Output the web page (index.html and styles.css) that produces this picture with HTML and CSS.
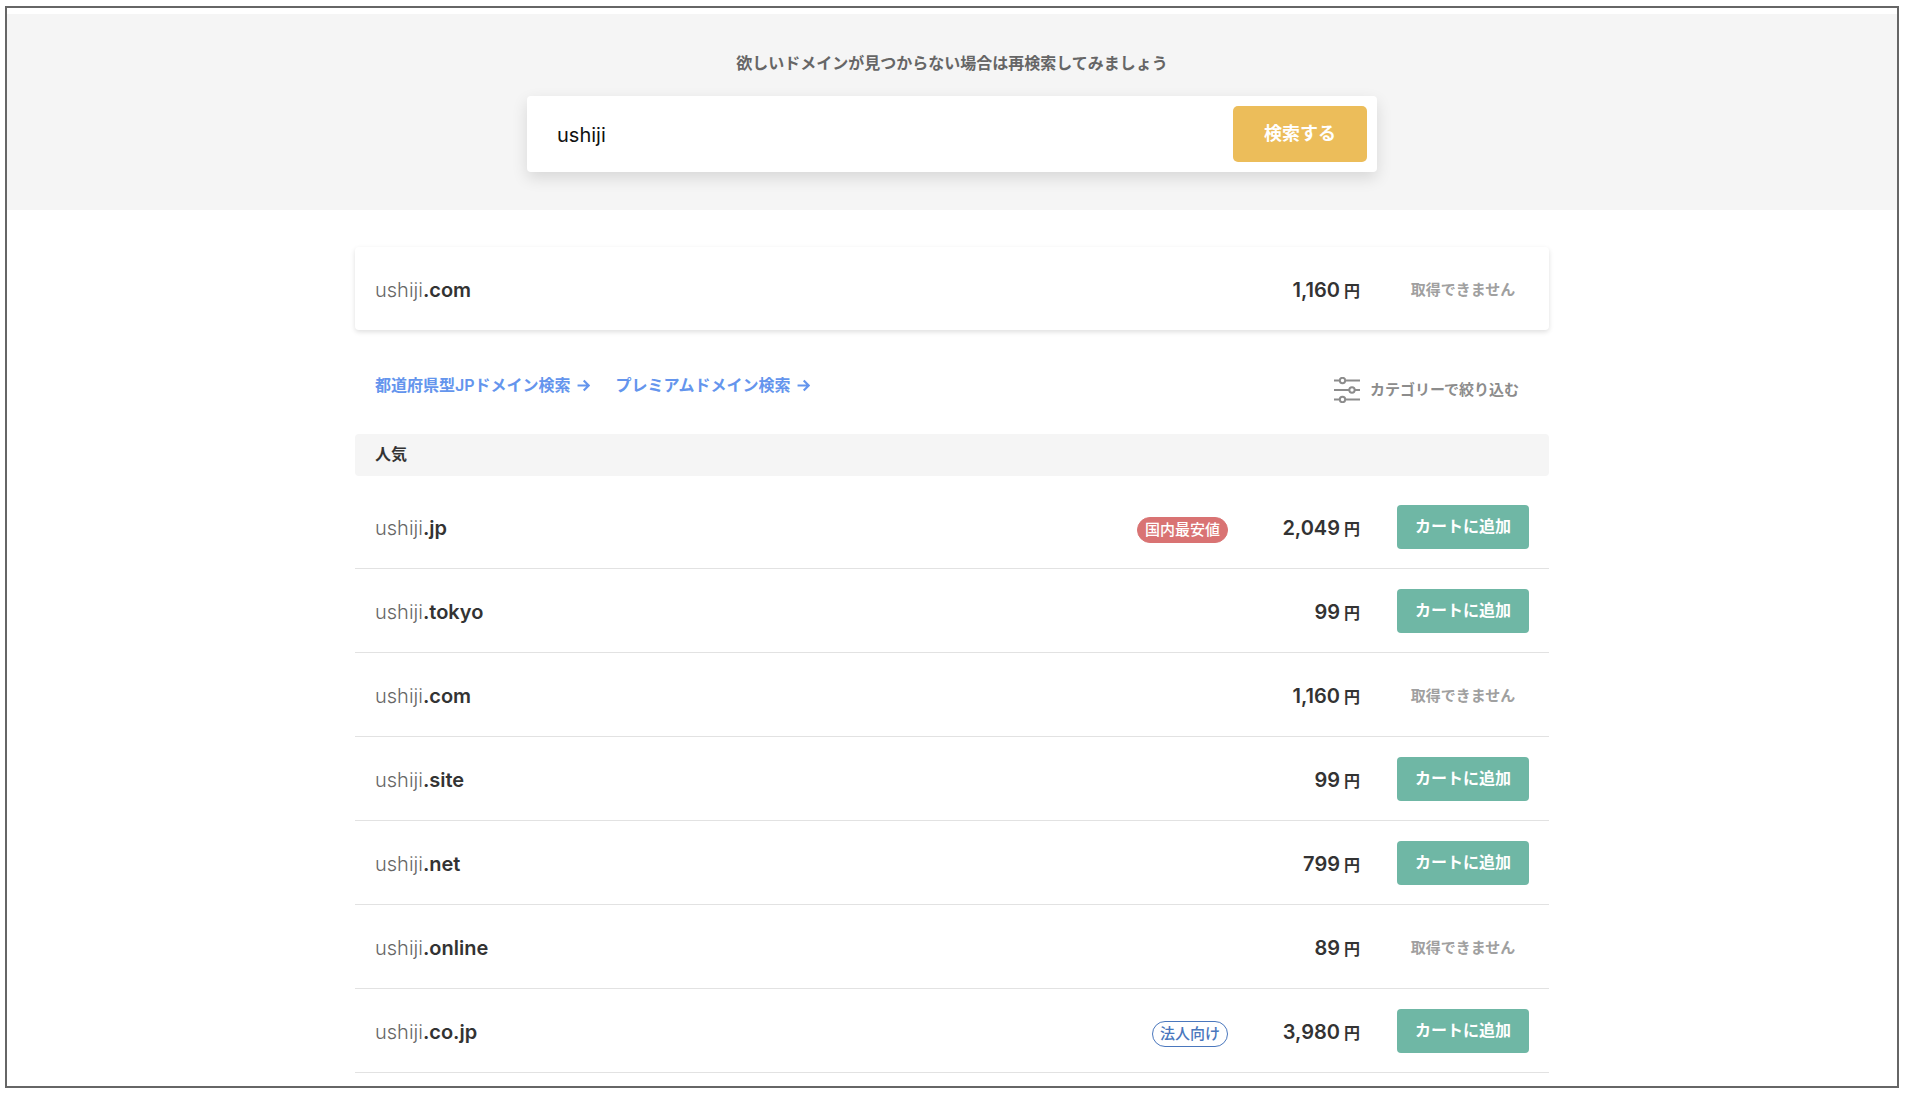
FILE: index.html
```html
<!DOCTYPE html>
<html lang="ja">
<head>
<meta charset="utf-8">
<meta name="viewport" content="width=device-width, initial-scale=1">
<title>ドメイン検索</title>
<link rel="stylesheet" href="styles.css">
</head>
<body>
<div class="frame">
  <header class="search">
    <label class="search-lead" for="domain">欲しいドメインが見つからない場合は再検索してみましょう</label>
    <form class="search-box">
      <input class="search-input" id="domain" type="text" value="ushiji">
      <button class="search-button" type="submit">検索する</button>
    </form>
  </header>

  <main class="results">
    <section class="exact">
      <span class="domain">ushiji<b>.com</b></span>
      <span class="price">1,160<small>円</small></span>
      <span class="exact-state taken">取得できません</span>
    </section>

    <div class="tools">
      <nav class="links">
        <a href="#jp">都道府県型JPドメイン検索<svg class="arrow" viewBox="0 0 12 12"><path d="M0.5 6H10.5M6.2 1.4L10.8 6L6.2 10.6"/></svg></a>
        <a href="#premium">プレミアムドメイン検索<svg class="arrow" viewBox="0 0 12 12"><path d="M0.5 6H10.5M6.2 1.4L10.8 6L6.2 10.6"/></svg></a>
      </nav>
      <button class="filter" type="button">
        <svg class="filter-icon" viewBox="0 0 26 26"><path d="M0 3.5H5.5M11.5 3.5H26M0 13H15M21 13H26M0 22.500H5.500M11.500 22.500H26"/><circle cx="8.500" cy="3.500" r="2.700"/><circle cx="18" cy="13" r="2.700"/><circle cx="8.500" cy="22.500" r="2.700"/></svg>
        カテゴリーで絞り込む
      </button>
    </div>

    <h2 class="group">人気</h2>
    <table class="list">
      <tbody>
        <tr><td class="domain">ushiji<b>.jp</b></td><td class="tag"><span class="badge badge-low">国内最安値</span></td><td class="price">2,049<small>円</small></td><td class="action"><button class="cart" type="button">カートに追加</button></td></tr>
        <tr><td class="domain">ushiji<b>.tokyo</b></td><td class="tag"></td><td class="price">99<small>円</small></td><td class="action"><button class="cart" type="button">カートに追加</button></td></tr>
        <tr><td class="domain">ushiji<b>.com</b></td><td class="tag"></td><td class="price">1,160<small>円</small></td><td class="action taken">取得できません</td></tr>
        <tr><td class="domain">ushiji<b>.site</b></td><td class="tag"></td><td class="price">99<small>円</small></td><td class="action"><button class="cart" type="button">カートに追加</button></td></tr>
        <tr><td class="domain">ushiji<b>.net</b></td><td class="tag"></td><td class="price">799<small>円</small></td><td class="action"><button class="cart" type="button">カートに追加</button></td></tr>
        <tr><td class="domain">ushiji<b>.online</b></td><td class="tag"></td><td class="price">89<small>円</small></td><td class="action taken">取得できません</td></tr>
        <tr><td class="domain">ushiji<b>.co.jp</b></td><td class="tag"><span class="badge badge-corp">法人向け</span></td><td class="price">3,980<small>円</small></td><td class="action"><button class="cart" type="button">カートに追加</button></td></tr>
      </tbody>
    </table>
  </main>
</div>
</body>
</html>
```
FILE: styles.css
```css
*,
*::before,
*::after {
  box-sizing: border-box;
}

body {
  margin: 6px 7px 8px 5px;
  background: #fff;
  color: #333;
  font-family: Inter, "Noto Sans CJK JP", sans-serif;
  font-size: 16px;
  line-height: 24px;
}

button,
input {
  font: inherit;
  color: inherit;
  border: 0;
}

button {
  cursor: pointer;
}

.frame {
  padding: 6px 0 13px;
  border: 2px solid #666;
}

/* Search area */

.search {
  display: flex;
  flex-direction: column;
  align-items: center;
  gap: 21px;
  padding: 37px 24px 38px;
  background: #f5f5f5;
}

.search-lead {
  color: #666;
  font-weight: 600;
}

.search-box {
  display: flex;
  gap: 10px;
  width: 100%;
  max-width: 850px;
  height: 76px;
  padding: 10px;
  background: #fff;
  border-radius: 4px;
  box-shadow: 0 6px 16px rgba(0, 0, 0, 0.12);
}

.search-input {
  flex: 1;
  min-width: 0;
  padding: 2px 20px 0;
  background: transparent;
  color: #111;
  font-size: 20px;
  outline: 0;
}

.search-button {
  width: 134px;
  background: #ecbd5a;
  border-radius: 5px;
  color: #fff;
  font-size: 18px;
  font-weight: 600;
}

/* Results */

.results {
  width: 100%;
  max-width: 1194px;
  margin: 0 auto;
  padding-top: 37px;
}

.domain {
  color: #666;
  font-size: 20px;
  font-weight: 300;
}

.domain b {
  color: #333;
  font-weight: 600;
}

.price {
  font-size: 20px;
  font-weight: 600;
  text-align: right;
  white-space: nowrap;
}

.price small {
  margin-left: 4px;
  font-size: 16px;
}

.taken {
  color: #a0a0a0;
  font-size: 15px;
  font-weight: 600;
  text-align: center;
}

.exact {
  display: flex;
  align-items: center;
  height: 83px;
  padding: 3px 20px 0;
  border-radius: 4px;
  box-shadow: 0 2px 5px rgba(0, 0, 0, 0.13);
}

.exact .domain {
  flex: 1;
}

.exact-state {
  width: 132px;
  margin-left: 37px;
}

.tools {
  display: flex;
  justify-content: space-between;
  align-items: center;
  padding: 43px 30px 27px 20px;
}

.links {
  display: flex;
  gap: 26px;
  padding-bottom: 10px;
}

.links a {
  display: flex;
  align-items: center;
  gap: 6px;
  color: #6495ed;
  font-weight: 600;
  text-decoration: none;
}

.arrow {
  width: 13px;
  height: 13px;
  fill: none;
  stroke: currentColor;
  stroke-width: 2;
}

.filter {
  display: flex;
  align-items: center;
  gap: 10px;
  padding: 0;
  background: none;
  color: #8c8c8c;
  font-size: 15px;
  font-weight: 600;
}

.filter-icon {
  width: 26px;
  height: 26px;
  fill: none;
  stroke: currentColor;
  stroke-width: 2;
}

.group {
  margin: 0 0 9px;
  padding: 8px 20px 10px;
  background: #f5f5f5;
  border-radius: 4px;
  font-size: 16px;
  font-weight: 600;
  line-height: 24px;
}

.list {
  width: 100%;
  border-collapse: separate;
  border-spacing: 0;
}

.list td {
  height: 84px;
  padding: 0;
  border-bottom: 1px solid #e2e2e2;
  vertical-align: middle;
}

.list .domain {
  padding: 3px 0 0 20px;
}

.list .tag {
  width: 120px;
  padding-top: 6px;
  text-align: right;
}

.list .price {
  width: 132px;
  padding-top: 4px;
}

.list .action {
  width: 189px;
  padding: 0 20px 0 37px;
  white-space: nowrap;
}

.list .taken {
  padding-top: 3px;
}

.cart {
  display: block;
  width: 132px;
  height: 44px;
  padding: 0 0 2px;
  background: #6fb7a5;
  border-radius: 4px;
  color: #fff;
  font-weight: 600;
}

.badge {
  display: inline-block;
  padding: 0 7px;
  border: 1px solid;
  border-radius: 13px;
  font-size: 15px;
  font-weight: 500;
  line-height: 24px;
  white-space: nowrap;
  vertical-align: middle;
}

.badge-low {
  border-color: #d97373;
  background: #d97373;
  color: #fff;
}

.badge-corp {
  color: #4a77bd;
}
```
